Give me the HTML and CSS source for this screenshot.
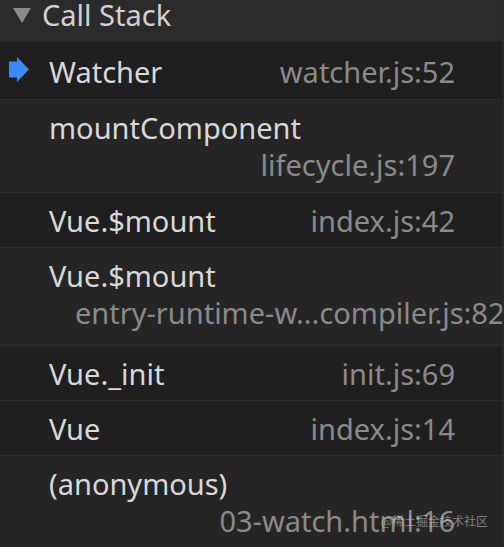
FILE: index.html
```html
<!DOCTYPE html>
<html>
<head>
<meta charset="utf-8">
<link rel="stylesheet" href="styles.css">
</head>
<body>
<div class="panel">
  <div class="header">
    <svg class="caret" width="18" height="16" viewBox="0 0 18 16"><polygon points="0,1 18,1 9,16" fill="#8b8b8b"/></svg>
    <span class="title">Call Stack</span>
  </div>
  <div class="row dark selected">
    <svg class="pointer" width="20" height="25" viewBox="0 0 20 25"><polygon points="0,4.5 8,4.5 8,0 20,12.5 8,25 8,20.5 0,20.5" fill="#3d8af7"/></svg>
    <div class="line"><span class="name">Watcher</span><span class="file">watcher.js:52</span></div>
  </div>
  <div class="row light double">
    <div class="line"><span class="name">mountComponent</span></div>
    <div class="line end"><span class="file">lifecycle.js:197</span></div>
  </div>
  <div class="row dark">
    <div class="line"><span class="name">Vue.$mount</span><span class="file">index.js:42</span></div>
  </div>
  <div class="row light tall">
    <div class="line"><span class="name">Vue.$mount</span></div>
    <div class="line overflow"><span class="file">entry-runtime-w...compiler.js:82</span></div>
  </div>
  <div class="row dark">
    <div class="line"><span class="name">Vue._init</span><span class="file">init.js:69</span></div>
  </div>
  <div class="row dark">
    <div class="line"><span class="name">Vue</span><span class="file">index.js:14</span></div>
  </div>
  <div class="row light double">
    <div class="line"><span class="name">(anonymous)</span></div>
    <div class="line end"><span class="file">03-watch.html:16</span></div>
  </div>
  <div class="watermark">@稀土掘金技术社区</div>
</div>
</body>
</html>
```
FILE: styles.css
```css
html, body {
  margin: 0;
  padding: 0;
  background: #222222;
  overflow: hidden;
}
.panel {
  position: relative;
  width: 504px;
  height: 547px;
  overflow: hidden;
  font-family: "Noto Sans", "Open Sans", sans-serif;
  font-size: 29px;
  color: #d6d6d6;
  border-right: 2px solid #2a2a2a;
  box-sizing: border-box;
}
.header {
  height: 42px;
  background: #2b2b2b;
  display: flex;
  align-items: flex-start;
  padding-left: 13px;
  gap: 11px;
  border-bottom: 1px solid #232323;
  box-sizing: border-box;
}
.caret {
  margin-top: 7px;
}
.title {
  line-height: 30px;
  color: #d2d2d2;
}
.row {
  position: relative;
  padding: 9px 47px 8px 49px;
  border-top: 1px solid #2c2c2c;
}
.row.selected {
  border-top: none;
  padding-top: 11px;
  padding-bottom: 9px;
}
.row.double { padding-bottom: 9px; }
.dark { background: #1f1f1f; }
.light { background: #252525; }
.row.tall { padding-bottom: 14px; }
.line {
  display: flex;
  justify-content: space-between;
  line-height: 37px;
  white-space: nowrap;
}
.line.end { justify-content: flex-end; }
.line.overflow {
  padding-left: 26px;
  margin-right: -47px;
  overflow: hidden;
}
.name { color: #d8d8d8; }
.file { color: #8a8a8a; }
.pointer {
  position: absolute;
  left: 9px;
  top: 15px;
}
.watermark {
  position: absolute;
  right: 14px;
  bottom: 18px;
  font-family: "Noto Sans CJK SC", sans-serif;
  font-size: 12px;
  color: rgba(220, 220, 220, 0.5);
}
```
